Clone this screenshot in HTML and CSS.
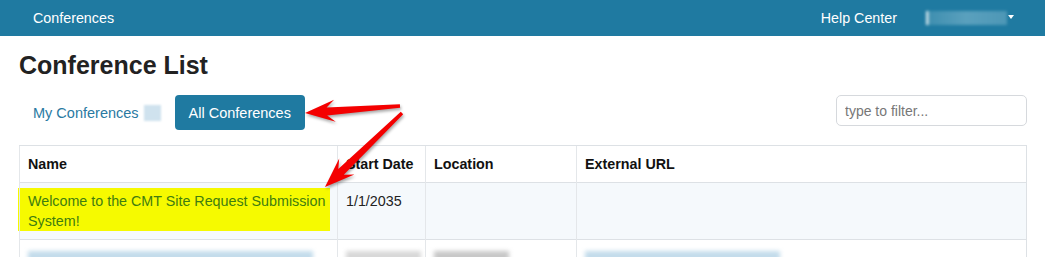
FILE: index.html
```html
<!DOCTYPE html>
<html lang="en">
<head>
  <meta charset="UTF-8" />
  <meta name="viewport" content="width=device-width, initial-scale=1" />
  <title>Conference List</title>
  <link rel="stylesheet" href="styles.css">
</head>
<body>

<nav class="topbar">
  <a class="brand" href="#">Conferences</a>
  <div class="topbar-right">
    <a class="help" href="#">Help Center</a>
    <span class="user"><span class="user-blur"></span><span class="caret"></span></span>
  </div>
</nav>

<main class="page">
  <h1>Conference List</h1>

  <div class="toolbar">
    <ul class="pills">
      <li><a href="#" class="pill">My Conferences <span class="badge"></span></a></li>
      <li><a href="#" class="pill active">All Conferences</a></li>
    </ul>
    <input class="filter" type="text" placeholder="type to filter...">
  </div>

  <table class="conf-table">
    <thead>
      <tr>
        <th class="col-name">Name</th>
        <th class="col-date">Start Date</th>
        <th class="col-loc">Location</th>
        <th>External URL</th>
      </tr>
    </thead>
    <tbody>
      <tr class="striped">
        <td><span class="marker"><a href="#" class="conf-link">Welcome to the CMT Site Request Submission System!</a></span></td>
        <td>1/1/2035</td>
        <td></td>
        <td></td>
      </tr>
      <tr>
        <td><span class="smudge blue wide"></span></td>
        <td><span class="smudge grey"></span></td>
        <td><span class="smudge grey dark"></span></td>
        <td><span class="smudge blue"></span></td>
      </tr>
    </tbody>
  </table>
</main>

<!-- annotation arrows drawn over the screenshot -->
<svg class="arrows" width="1045" height="257" viewBox="0 0 1045 257">
  <polygon points="305,113 335.7,121.8 327.2,115.4 400.1,107.8 399.9,104.2 326.6,107.4 334.1,99.8" />
  <polygon points="325,187 354.4,174.4 343.8,174.8 403.2,114.3 400.8,111.7 338.3,169 339.2,158.4" />
</svg>

</body>
</html>
```

FILE: styles.css
```css
body {
  font-family: "Liberation Sans", Arial, sans-serif;
  font-size: 14px;
  margin: 0;
  color: #222;
  background: #fff;
  overflow: hidden;
}
a {
  text-decoration: none;
}
.topbar {
  height: 36px;
  background: #1f7aa1;
  display: flex;
  align-items: center;
  justify-content: space-between;
  padding: 0 31px 0 33px;
}
.topbar a {
  color: #fff;
  font-size: 14.3px;
}
.topbar-right {
  display: flex;
  align-items: center;
}
.help {
  margin-right: 29px;
}
.user {
  display: flex;
  align-items: center;
}
.user-blur {
  width: 81px;
  height: 14px;
  background: linear-gradient(90deg, #d8e8ee 0 2px, #3f8fb0 3px, #5aa0bd 50%, #4d97b6);
  filter: blur(1.5px);
}
.caret {
  width: 0;
  height: 0;
  margin-left: 1px;
  margin-top: -2px;
  border-left: 3px solid transparent;
  border-right: 3px solid transparent;
  border-top: 4px solid #fff;
}
.page {
  padding: 0 18px 0 19px;
}
h1 {
  font-size: 25px;
  line-height: 28px;
  font-weight: bold;
  margin: 15px 0 16px;
  color: #222;
}
.toolbar {
  display: flex;
  justify-content: space-between;
  align-items: flex-start;
}
.pills {
  list-style: none;
  margin: 0;
  padding: 0;
  display: flex;
}
.pill {
  display: flex;
  align-items: center;
  height: 35px;
  box-sizing: border-box;
  padding: 0 14px;
  border-radius: 4px;
  color: #2a7aa2;
  font-size: 14.5px;
}
.pill.active {
  background: #1f7aa1;
  color: #fff;
}
.badge {
  display: inline-block;
  width: 17px;
  height: 16px;
  margin-left: 5px;
  background: #cfe2ee;
  filter: blur(1px);
}
.filter {
  width: 191px;
  height: 31px;
  box-sizing: border-box;
  border: 1px solid #d6d9dd;
  border-radius: 5px;
  padding: 0 8px;
  font-family: "Liberation Sans", Arial, sans-serif;
  font-size: 14px;
}
.filter::placeholder {
  color: #777;
}
.conf-table {
  width: 100%;
  margin-top: 15px;
  border-collapse: collapse;
  table-layout: fixed;
  border: 1px solid #dde1e5;
  font-size: 14.3px;
}
.col-name {
  width: 301px;
}
.col-date {
  width: 71px;
}
.col-loc {
  width: 134px;
}
.conf-table th,
.conf-table td {
  text-align: left;
  vertical-align: top;
  padding: 8px 8px;
  line-height: 20px;
  border-left: 1px solid #e4e7ea;
  border-top: 1px solid #dde1e5;
}
.conf-table th {
  font-weight: bold;
  color: #111;
}
.striped td {
  background: #f5f9fc;
  height: 40px;
}
.marker {
  display: block;
  margin: -3px -1px 0 -10px;
  padding: 3px 1px 0 10px;
  background: #f6fa00;
}
.conf-link {
  color: #3f7d10;
}
.smudge {
  display: block;
  height: 10px;
  margin-top: 3px;
  filter: blur(2px);
}
.smudge.blue {
  background: #c3dceb;
  width: 195px;
}
.smudge.blue.wide {
  width: 285px;
}
.smudge.grey {
  background: #d8d8d8;
  width: 75px;
}
.smudge.grey.dark {
  background: #c8c8c8;
}
.arrows {
  position: absolute;
  left: 0;
  top: 0;
  pointer-events: none;
  filter: drop-shadow(1px 2px 1.5px rgba(0, 0, 0, 0.35));
}
.arrows polygon {
  fill: #f40000;
}
```
